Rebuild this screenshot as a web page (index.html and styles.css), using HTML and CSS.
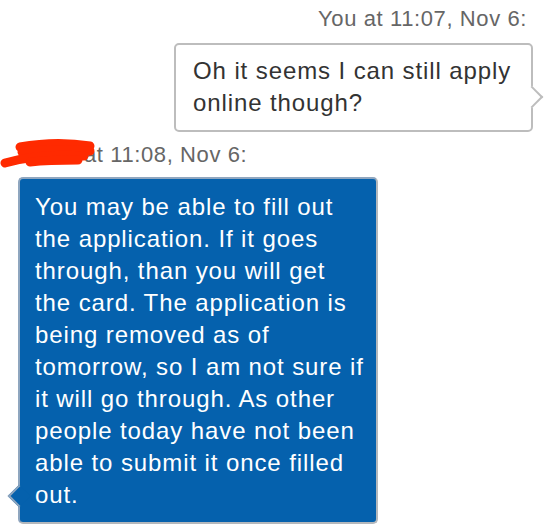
FILE: index.html
```html
<!DOCTYPE html>
<html lang="en">
<head>
    <meta charset="UTF-8">
    <meta name="viewport" content="width=device-width, initial-scale=1.0">
    <title>Chat transcript</title>
    <link rel="stylesheet" href="styles.css">
</head>
<body>
    <div class="chat">
        <!-- Outgoing message -->
        <div class="message outgoing">
            <div class="meta">You at 11:07, Nov 6:</div>
            <div class="bubble">
                Oh it seems I can still apply<br>online though?
                <span class="tail"></span>
            </div>
        </div>

        <!-- Incoming message -->
        <div class="message incoming">
            <div class="meta">
                <svg class="redact" width="84" height="30" viewBox="0 0 84 30">
                    <path d="M20 7 C42 3 66 2 90 6" />
                    <path d="M22 12 C46 9 68 9 90 11" />
                    <path d="M5 23 C30 16 55 14 84 16" />
                    <path d="M30 22 C48 20 64 20 78 20" />
                </svg>at 11:08, Nov 6:
            </div>
            <div class="bubble">
                You may be able to fill out<br>the application. If it goes<br>through, than you will get<br>the card. The application is<br>being removed as of<br>tomorrow, so I am not sure if<br>it will go through. As other<br>people today have not been<br>able to submit it once filled<br>out.
                <span class="tail"></span>
            </div>
        </div>
    </div>
</body>
</html>
```

FILE: styles.css
```css
* {
    margin: 0;
    padding: 0;
    box-sizing: border-box;
}

body {
    background: #ffffff;
    font-family: 'Liberation Sans', Arial, sans-serif;
    width: 550px;
    height: 532px;
    overflow: hidden;
}

.chat {
    display: flex;
    flex-direction: column;
    padding-top: 4px;
}

.message {
    display: flex;
    flex-direction: column;
}

.meta {
    font-size: 22px;
    line-height: 30px;
    letter-spacing: 0.6px;
    color: #666666;
}

.bubble {
    position: relative;
    width: 360px;
    font-size: 24px;
    line-height: 32px;
    letter-spacing: 0.9px;
    white-space: nowrap;
    border-radius: 5px;
}

.tail {
    position: absolute;
    width: 16px;
    height: 16px;
    transform: rotate(45deg);
}

/* Outgoing */
.outgoing {
    align-items: flex-end;
    padding-right: 17px;
}

.outgoing .meta {
    padding-right: 6px;
}

.outgoing .bubble {
    margin-top: 9px;
    width: 359px;
    padding: 10px 16px 11px 17px;
    background: #ffffff;
    color: #333333;
    border: 2px solid #bdbdbd;
}

.outgoing .tail {
    right: -9px;
    top: 44px;
    background: #ffffff;
    border-top: 2px solid #bdbdbd;
    border-right: 2px solid #bdbdbd;
}

/* Incoming */
.incoming {
    align-items: flex-start;
    padding-left: 18px;
    margin-top: 8px;
}

.incoming .meta {
    display: flex;
    align-items: center;
    margin-left: -18px;
}

/* scribble over the sender's name */
.redact {
    position: relative;
    z-index: 1;
    overflow: visible;
    fill: none;
    stroke: #ff2a00;
    stroke-width: 9;
    stroke-linecap: round;
}

.incoming .bubble {
    margin-top: 7px;
    padding: 12px 14px 11px 15px;
    background: #0561ad;
    color: #ffffff;
    border: 2px solid #b4b8bc;
    border-top-color: #8fa6bf;
    border-left-color: #8fa6bf;
}

.incoming .tail {
    left: -9px;
    bottom: 18px;
    background: #0561ad;
    border-left: 2px solid #8fa6bf;
    border-bottom: 2px solid #8fa6bf;
}
```
